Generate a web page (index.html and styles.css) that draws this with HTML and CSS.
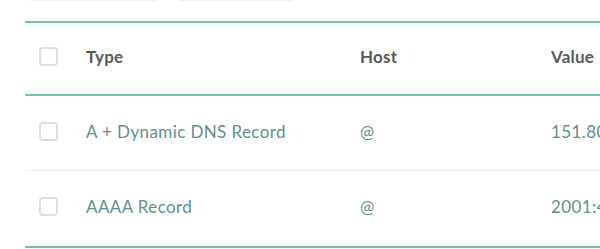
FILE: index.html
```html
<!DOCTYPE html>
<html>
<head>
<meta charset="utf-8">
<link rel="stylesheet" href="styles.css">
</head>
<body>
<div class="toolbar"><span class="seg seg-a"></span><span class="seg seg-b"></span></div>
<div class="table">
  <div class="row head">
    <div class="cell check"><span class="box"></span></div>
    <div class="cell type">Type</div>
    <div class="cell host">Host</div>
    <div class="cell value">Value</div>
  </div>
  <div class="row body">
    <div class="cell check"><span class="box"></span></div>
    <div class="cell type">A + Dynamic DNS Record</div>
    <div class="cell host">@</div>
    <div class="cell value">151.80.43.12</div>
  </div>
  <div class="row body last">
    <div class="cell check"><span class="box"></span></div>
    <div class="cell type">AAAA Record</div>
    <div class="cell host">@</div>
    <div class="cell value">2001:41d0:8:1f3c::1</div>
  </div>
</div>
</body>
</html>
```
FILE: styles.css
```css
html, body {
  margin: 0;
  padding: 0;
  background: #fff;
  overflow: hidden;
}
body {
  width: 600px;
  height: 249px;
  font-family: Lato, "Open Sans", sans-serif;
}
.toolbar {
  display: flex;
  gap: 23px;
  margin-left: 30px;
  height: 1px;
}
.seg {
  display: block;
  height: 1px;
  background: #f1f1f1;
}
.seg-a { width: 127px; }
.seg-b { width: 113px; }
.table {
  margin-top: 20px;
  margin-left: 25px;
  border-top: 2px solid #7bbcb8;
  border-bottom: 2px solid #7bbcb8;
  white-space: nowrap;
}
.row {
  display: grid;
  grid-template-columns: 61px 274px 191px 1fr;
  align-items: center;
  box-sizing: border-box;
  padding-bottom: 4px;
}
.head {
  height: 73px;
  border-bottom: 2px solid #7bbcb8;
  color: #5a5a5a;
  font-weight: 700;
  font-size: 17px;
  letter-spacing: 0.2px;
}
.body {
  height: 75px;
  color: #5f8f8c;
  font-size: 17px;
  letter-spacing: 0.4px;
  border-bottom: 1px solid #ececec;
}
.body.last {
  height: 75px;
  border-bottom: none;
}
.cell {
  overflow: hidden;
}
.check {
  padding-left: 14px;
  display: flex;
  align-items: center;
}
.box {
  display: block;
  width: 15px;
  height: 15px;
  border: 2px solid #dedede;
  border-radius: 4px;
}
```
